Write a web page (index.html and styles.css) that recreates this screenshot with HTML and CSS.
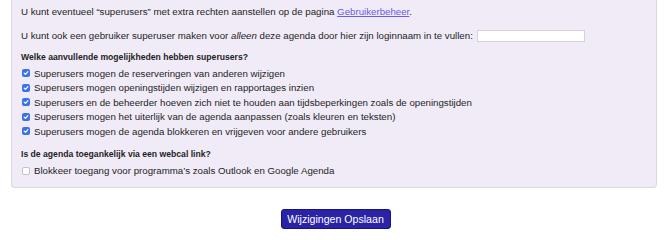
FILE: index.html
```html
<!DOCTYPE html>
<html lang="nl">
<head>
<meta charset="utf-8">
<title>Superusers</title>
<link rel="stylesheet" href="styles.css">
</head>
<body>
<div class="panel">
  <p class="intro">U kunt eventueel “superusers” met extra rechten aanstellen op de pagina <a href="#" class="link">Gebruikerbeheer</a>.</p>
  <p class="intro second">U kunt ook een gebruiker superuser maken voor <em>alleen</em> deze agenda door hier zijn loginnaam in te vullen: <input class="login" type="text"></p>
  <h4 class="heading">Welke aanvullende mogelijkheden hebben superusers?</h4>
  <ul class="options">
    <li class="option"><span class="cb checked"><svg viewBox="0 0 8 8" width="8" height="8"><path d="M2.2 4.1 L3.5 5.4 L5.9 2.6" fill="none" stroke="#fff" stroke-width="1.2" stroke-linecap="round" stroke-linejoin="round"/></svg></span>Superusers mogen de reserveringen van anderen wijzigen</li>
    <li class="option"><span class="cb checked"><svg viewBox="0 0 8 8" width="8" height="8"><path d="M2.2 4.1 L3.5 5.4 L5.9 2.6" fill="none" stroke="#fff" stroke-width="1.2" stroke-linecap="round" stroke-linejoin="round"/></svg></span>Superusers mogen openingstijden wijzigen en rapportages inzien</li>
    <li class="option"><span class="cb checked"><svg viewBox="0 0 8 8" width="8" height="8"><path d="M2.2 4.1 L3.5 5.4 L5.9 2.6" fill="none" stroke="#fff" stroke-width="1.2" stroke-linecap="round" stroke-linejoin="round"/></svg></span>Superusers en de beheerder hoeven zich niet te houden aan tijdsbeperkingen zoals de openingstijden</li>
    <li class="option"><span class="cb checked"><svg viewBox="0 0 8 8" width="8" height="8"><path d="M2.2 4.1 L3.5 5.4 L5.9 2.6" fill="none" stroke="#fff" stroke-width="1.2" stroke-linecap="round" stroke-linejoin="round"/></svg></span>Superusers mogen het uiterlijk van de agenda aanpassen (zoals kleuren en teksten)</li>
    <li class="option"><span class="cb checked"><svg viewBox="0 0 8 8" width="8" height="8"><path d="M2.2 4.1 L3.5 5.4 L5.9 2.6" fill="none" stroke="#fff" stroke-width="1.2" stroke-linecap="round" stroke-linejoin="round"/></svg></span>Superusers mogen de agenda blokkeren en vrijgeven voor andere gebruikers</li>
  </ul>
  <h4 class="heading second-heading">Is de agenda toegankelijk via een webcal link?</h4>
  <ul class="options">
    <li class="option"><span class="cb"></span>Blokkeer toegang voor programma’s zoals Outlook en Google Agenda</li>
  </ul>
</div>
<div class="actions">
  <button class="save" type="button">Wijzigingen Opslaan</button>
</div>
</body>
</html>
```

FILE: styles.css
```css
html, body {
  margin: 0;
  padding: 0;
  background: #fff;
}
body {
  font-family: "Liberation Sans", Arial, sans-serif;
  font-size: 9.7px;
  color: #1e1e1e;
}
.panel {
  margin: 0 14px 0 11px;
  padding: 5px 9px 9px 9px;
  background: #f0ebf6;
  border: 1px solid #dcd8e0;
  border-top: none;
  border-radius: 0 0 4px 4px;
}
.intro {
  margin: 0;
  line-height: 14px;
}
.intro.second {
  margin-top: 10px;
}
.link {
  color: #6a5de8;
  text-decoration: underline;
}
.login {
  box-sizing: border-box;
  width: 108px;
  height: 12px;
  margin: 0 0 0 1px;
  padding: 0;
  border: 1px solid #d6d3da;
  background: #fff;
  vertical-align: middle;
}
.heading {
  margin: 7px 0 2px 0;
  font-size: 8.65px;
  font-weight: bold;
  line-height: 14px;
}
.second-heading {
  margin-top: 8px;
  margin-bottom: 3px;
}
.options {
  list-style: none;
  margin: 0;
  padding: 0;
}
.option {
  display: flex;
  align-items: center;
  gap: 4px;
  height: 14.5px;
  padding-left: 1px;
}
.cb {
  box-sizing: border-box;
  width: 8px;
  height: 8px;
  flex: none;
  border-radius: 2px;
  background: #fff;
  border: 1px solid #c4c1c8;
  display: flex;
}
.cb.checked {
  background: #3a73e8;
  border: none;
}
.actions {
  display: flex;
  justify-content: center;
  padding: 21px 0 0 0;
}
.save {
  width: 110px;
  height: 20px;
  padding: 0;
  border: 1px solid #1a1480;
  border-radius: 3px;
  background: #2b23a6;
  color: #fff;
  font-family: "Liberation Sans", Arial, sans-serif;
  font-size: 10.6px;
  font-weight: 500;
}
```
